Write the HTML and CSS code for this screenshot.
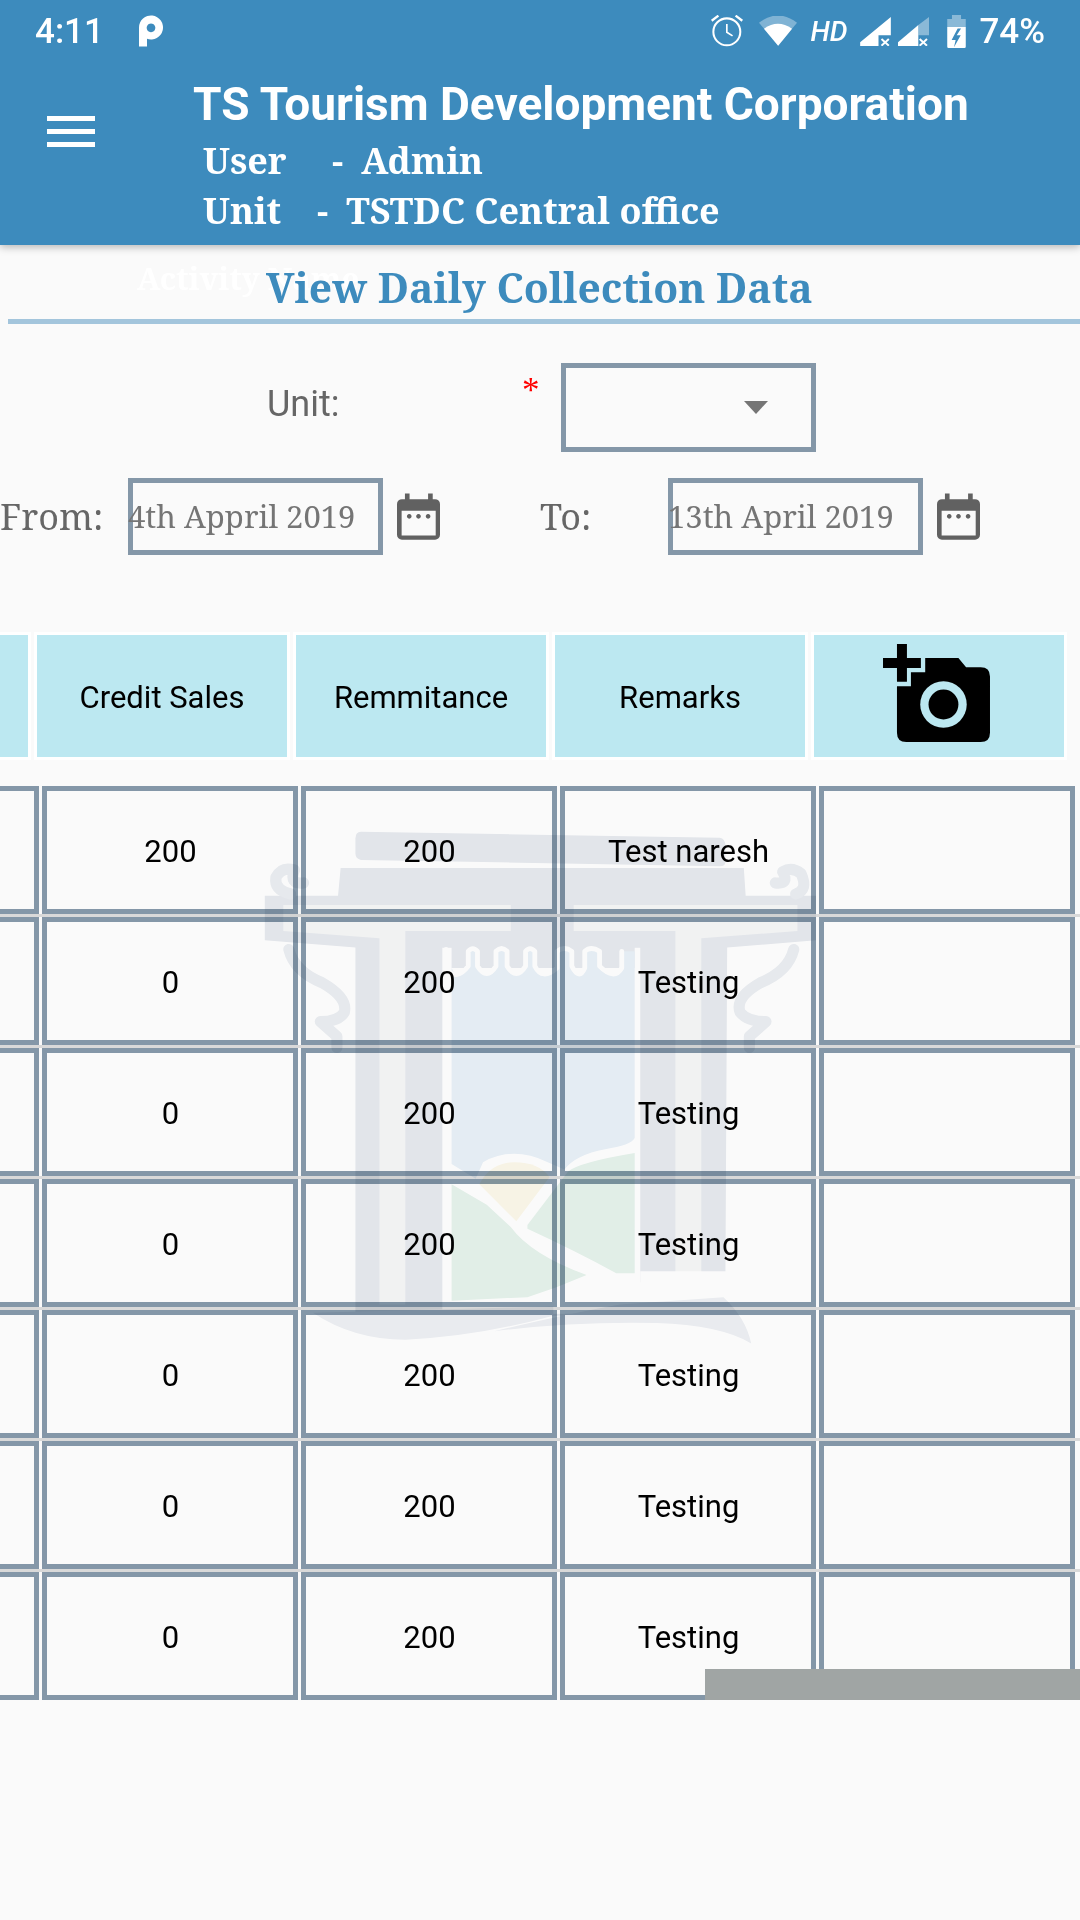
FILE: index.html
```html
<!DOCTYPE html>
<html lang="en">
<head>
<meta charset="utf-8">
<title>View Daily Collection Data</title>
<link rel="stylesheet" href="styles.css">
</head>
<body>
<div class="page">
  <header class="header">
    <div class="status">
      <span class="time">4:11</span>
      <svg class="ic-p" viewBox="417 47 72 93"><path fill-rule="evenodd" d="M417 83a36 36 0 1 1 24 34v23h-24zM453 71a13 13 0 1 0 .01 0z"/></svg>
      <span class="status-fill"></span>
      <svg class="ic-alarm" viewBox="90 45 95 95"><g fill="none" stroke="#fff" stroke-width="6"><circle cx="137" cy="95" r="40"/><path d="M137 72v24l17 11" stroke-width="5"/><path d="M92 62l20-15M183 62l-20-15" stroke-width="7"/></g></svg>
      <svg class="ic-wifi" viewBox="240 42 115 90"><path d="M240 62Q297 18 355 62L298 132z" fill="#fff" fill-opacity=".35"/><path d="M255 80Q297 50 340 80L298 132z" fill="#fff"/></svg>
      <span class="hd">HD</span>
      <svg class="ic-sig" viewBox="543 48 92 87"><path d="M543 124L635 48V103H598V135H543z" fill="#fff"/><path d="M607 114l22 20M629 114l-22 20" stroke="#fff" stroke-width="6"/></svg>
      <svg class="ic-sig ic-sig2" viewBox="657 48 93 87"><path d="M657 124L718 72V135H657z" fill="#fff"/><path d="M718 72L750 48V103H718z" fill="#fff" fill-opacity=".4"/><path d="M722 114l22 20M744 114l-22 20" stroke="#fff" stroke-width="6"/></svg>
      <svg class="ic-bat" viewBox="805 42 55 98"><path d="M819 42h27v12h14v24H805V54h14z" fill="#fff" fill-opacity=".4"/><path fill-rule="evenodd" d="M805 78h55v58a4 4 0 0 1-4 4H809a4 4 0 0 1-4-4zM836 82l-18 34h12l-5 22 20-36H833l13-20z" fill="#fff"/></svg>
      <span class="battery">74%</span>
    </div>
    <div class="appbar">
      <div class="menu"><span></span><span></span><span></span></div>
      <div class="titles">
        <div class="brand">TS Tourism Development Corporation</div>
        <div class="meta"><span class="meta-k">User</span><span class="dash-user">-</span><span class="val-user">Admin</span></div>
        <div class="meta"><span class="meta-k">Unit</span><span class="dash-unit">-</span><span class="val-unit">TSTDC Central office</span></div>
      </div>
    </div>
  </header>

  <main class="main">
    <div class="page-title">
      <span class="ghost">Activity Name</span>
      <h1>View Daily Collection Data</h1>
    </div>

    <div class="row-unit">
      <label class="lbl-unit">Unit:</label>
      <span class="req">*</span>
      <div class="select"><svg class="caret" viewBox="0 0 24 13"><path d="M0 0h24L12 13z"/></svg></div>
    </div>

    <div class="row-date">
      <label class="lbl-date lbl-from">From:</label>
      <div class="date-input">4th Appril 2019</div>
      <svg class="cal" viewBox="48 38 130 142"><path fill-rule="evenodd" d="M72 38h14v17h56V38h14v17h7a15 15 0 0 1 15 15v93a15 15 0 0 1-15 15H63a15 15 0 0 1-15-15V70a15 15 0 0 1 15-15h9zM62 90v75h103V90zM85 100a7 7 0 1 0 .01 0zM113 100a7 7 0 1 0 .01 0zM142 100a7 7 0 1 0 .01 0z"/></svg>
      <label class="lbl-date lbl-to">To:</label>
      <div class="date-input">13th April 2019</div>
      <svg class="cal" viewBox="48 38 130 142"><path fill-rule="evenodd" d="M72 38h14v17h56V38h14v17h7a15 15 0 0 1 15 15v93a15 15 0 0 1-15 15H63a15 15 0 0 1-15-15V70a15 15 0 0 1 15-15h9zM62 90v75h103V90zM85 100a7 7 0 1 0 .01 0zM113 100a7 7 0 1 0 .01 0zM142 100a7 7 0 1 0 .01 0z"/></svg>
    </div>

    <div class="thead">
      <div class="th"></div>
      <div class="th">Credit Sales</div>
      <div class="th">Remmitance</div>
      <div class="th">Remarks</div>
      <div class="th">
        <svg class="ic-cam" viewBox="68 58 322 295"><path d="M195 100H295L318 128H362Q390 128 390 156V325Q390 353 362 353H138Q110 353 110 325V185H152V143H195Z"/><circle cx="250" cy="240" r="70" fill="#bce8f1"/><circle cx="250" cy="240" r="45"/><path d="M110 58h30v42h42v30h-42v42h-30v-42H68v-30h42z"/></svg>
      </div>
    </div>

    <div class="tbody">
      <div class="tr"><div class="td"></div><div class="td">200</div><div class="td">200</div><div class="td">Test naresh</div><div class="td"></div></div>
      <div class="tr"><div class="td"></div><div class="td">0</div><div class="td">200</div><div class="td">Testing</div><div class="td"></div></div>
      <div class="tr"><div class="td"></div><div class="td">0</div><div class="td">200</div><div class="td">Testing</div><div class="td"></div></div>
      <div class="tr"><div class="td"></div><div class="td">0</div><div class="td">200</div><div class="td">Testing</div><div class="td"></div></div>
      <div class="tr"><div class="td"></div><div class="td">0</div><div class="td">200</div><div class="td">Testing</div><div class="td"></div></div>
      <div class="tr"><div class="td"></div><div class="td">0</div><div class="td">200</div><div class="td">Testing</div><div class="td"></div></div>
      <div class="tr"><div class="td"></div><div class="td">0</div><div class="td">200</div><div class="td">Testing</div><div class="td"></div></div>
      <div class="scrollbar"></div>
    </div>
  </main>

  <svg class="watermark" viewBox="0 0 1568 1568" aria-hidden="true">
    <!-- roof bars -->
    <path class="wm-gray" d="M300 32L1270 48Q1285 50 1285 70V115Q1285 125 1270 125L300 108Q285 105 285 90V50Q285 32 300 32Z"/>
    <path class="wm-gray" d="M245 130H1335L1340 205H1530V325L1290 345L1285 1285L1220 1250H1055L1040 1340H285V345L40 325V205H238Z"/>
    <!-- pale slots and the strips between the columns -->
    <path class="wm-pale" d="M90 230H705V300H420V1310H350V320L90 300Z"/>
    <path class="wm-pale" d="M875 230H1480V300L1220 320V1300H1150V300H875Z"/>
    <!-- panel -->
    <rect class="wm-white" x="520" y="345" width="535" height="990"/>
    <rect class="wm-white" x="1055" y="1220" width="240" height="125"/>
    <path class="wm-gray" d="M520 300H1055V345H1040L1040 400H545V345H520Z"/>
    <path class="wm-blue" d="M545 400Q560 435 590 395V355Q602 340 615 355V395Q640 435 665 395V355Q680 340 695 355V395Q720 435 745 395V355Q757 340 770 355V395Q790 435 830 400V355Q850 340 870 355V395Q890 435 905 400V355Q922 340 945 355V395Q985 435 1005 400V355H1040V860Q1030 880 960 890Q880 905 850 945L805 925Q710 880 630 925L610 970L545 930Z"/>
    <path class="wm-line" d="M530 350V405Q560 435 590 395V355Q602 340 615 355V395Q640 435 665 395V355Q680 340 695 355V395Q720 435 745 395V355Q757 340 770 355V395Q790 435 830 400V355Q850 340 870 355V395Q890 435 905 400V355Q922 340 945 355V395Q985 435 1005 400V355"/>
    <path class="wm-yellow" d="M620 985Q650 925 715 925Q780 925 810 965L720 1085Z"/>
    <path class="wm-green" d="M545 985L640 1040L705 1100Q760 1175 910 1230Q830 1265 750 1290L545 1300Z"/>
    <path class="wm-green" d="M750 1095L860 950Q890 925 1040 900V1225L990 1225Q880 1165 750 1105Z"/>
    <!-- scrolls -->
    <path class="wm-stroke" d="M105 350Q120 410 195 440Q265 480 255 520Q240 545 190 545L235 585V615"/>
    <path class="wm-stroke" d="M1470 350Q1455 410 1380 440Q1310 480 1325 520Q1345 545 1395 545L1350 585V615"/>
    <path class="wm-stroke" d="M110 200Q65 190 70 155Q85 125 120 135Q105 175 145 170"/>
    <path class="wm-stroke" d="M1475 200Q1510 190 1490 145Q1465 125 1440 140Q1460 175 1420 170"/>
    <!-- ribbons -->
    <path class="wm-ribbon" d="M170 1332L820 1315V1340Q620 1395 420 1405Q280 1405 170 1332Z"/>
    <path class="wm-ribbon" d="M660 1382Q860 1335 1000 1310L1280 1290Q1340 1345 1355 1415Q1270 1365 1100 1360Q880 1355 660 1382Z"/>
  </svg>
</div>
</body>
</html>
```

FILE: styles.css
```css
* { box-sizing: border-box; }
html, body { margin: 0; padding: 0; }
body { background: #fafafa; font-family: Roboto, sans-serif; }
.page { position: relative; width: 1080px; height: 1920px; overflow: hidden; background: #fafafa; }

.header { height: 245px; background: #3d8bbd; color: #fff; box-shadow: 0 2px 8px rgba(0,0,0,.28); position: relative; z-index: 2; }
.status { height: 62px; display: flex; align-items: center; padding: 0 36px 0 35px; }
.time { font-size: 35px; font-weight: 500; width: 104px; }
.ic-p { width: 24px; height: 32px; fill: #fff; }
.status-fill { flex: 1; }
.ic-alarm { width: 32px; height: 32px; margin-right: 16px; }
.ic-wifi { width: 38px; height: 30px; margin-right: 13px; }
.hd { font-size: 28px; font-weight: 500; font-style: italic; margin-right: 14px; width: 36px; }
.ic-sig { width: 31px; height: 29px; }
.ic-sig2 { margin-left: 7px; margin-right: 18px; }
.ic-bat { width: 19px; height: 33px; margin-right: 13px; }
.battery { font-size: 35px; font-weight: 500; margin-right: -1px; }

.appbar { display: flex; align-items: flex-start; padding-left: 47px; }
.menu { display: flex; flex-direction: column; gap: 8px; width: 48px; margin-top: 54px; }
.menu span { display: block; height: 5px; background: #fff; }
.titles { margin-left: 98px; padding-top: 17px; }
.brand { font-size: 46px; font-weight: 700; line-height: 50px; white-space: nowrap; }
.meta { font-family: "Noto Serif", "DejaVu Serif Condensed", "Liberation Serif", serif; font-weight: 700; font-size: 36px; line-height: 50px; margin-left: 10px; white-space: nowrap; display: flex; position: relative; top: 7px; }
.meta-k { width: 83px; }
.dash-user { margin-left: 46px; }
.val-user { margin-left: 18px; }
.dash-unit { margin-left: 31px; }
.val-unit { margin-left: 18px; }

.main { display: flex; flex-direction: column; }
.page-title { position: relative; margin-left: 8px; height: 79px; border-bottom: 5px solid #a3c5dc; }
.page-title h1 { margin: 0; padding: 17px 0 0 258px; font-family: "Noto Serif", "DejaVu Serif Condensed", "Liberation Serif", serif; font-weight: 700; font-size: 40.8px; line-height: 50px; color: #3d8bbd; position: relative; white-space: nowrap; }
.ghost { position: absolute; left: 129px; top: 8px; font-family: "Noto Serif", "DejaVu Serif Condensed", "Liberation Serif", serif; font-weight: 700; font-size: 31px; line-height: 50px; color: #fff; white-space: nowrap; }

.row-unit { display: flex; align-items: flex-start; margin-top: 39px; height: 89px; }
.lbl-unit { font-size: 36px; color: #666; margin-left: 267px; margin-top: 16px; width: 255px; line-height: 50px; }
.req { color: #f00; font-family: "Liberation Serif", serif; font-size: 35px; line-height: 38px; margin-top: 9px; width: 39px; }
.select { width: 255px; height: 89px; border: 5px solid #8497a8; display: flex; align-items: center; justify-content: flex-end; padding-right: 43px; }
.caret { width: 24px; height: 13px; fill: #757575; }

.row-date { display: flex; align-items: center; margin-top: 26px; height: 77px; }
.lbl-date { font-family: "Noto Serif", "DejaVu Serif Condensed", "Liberation Serif", serif; font-size: 36px; color: #666; }
.lbl-from { width: 128px; }
.lbl-to { margin-left: 100px; width: 128px; }
.date-input { width: 255px; height: 77px; border: 5px solid #8497a8; display: flex; align-items: center; font-family: "Noto Serif", "DejaVu Serif Condensed", "Liberation Serif", serif; font-size: 31px; color: #757575; white-space: nowrap; line-height: 1; text-indent: -5px; }
.cal { width: 43px; height: 48px; margin-left: 14px; fill: #616161; }

.thead { display: flex; gap: 3px; margin-top: 77px; margin-left: -225px; }
.th { flex: 0 0 256px; height: 128px; border: 3px solid #fff; background: #bce8f1; display: flex; align-items: center; justify-content: center; font-size: 31px; padding-top: 2px; color: #000; }
.ic-cam { width: 107px; height: 98px; margin-right: 5px; margin-bottom: 8px; fill: #000; }

.tbody { position: relative; margin-top: 26px; }
.tr { display: flex; gap: 3px; margin-left: -217px; height: 131px; position: relative; }
.tr::after { content: ""; position: absolute; left: 0; right: -400px; top: 128px; height: 3px; background: #d9d9d9; }
.tr:nth-last-child(2)::after { display: none; }
.td { flex: 0 0 256px; height: 128px; border: 5px solid #8497a8; display: flex; align-items: center; justify-content: center; font-size: 31px; padding: 2px 0 0 1px; color: #000; }
.scrollbar { position: absolute; right: 0; width: 375px; top: 883px; height: 31px; background: #a0a5a4; z-index: 3; }

.watermark { position: absolute; left: 250px; top: 820px; width: 580px; height: 580px; mix-blend-mode: multiply; pointer-events: none; filter: blur(.7px); }
.wm-gray { fill: #e7eaef; }
.wm-pale { fill: #f6f7f7; }
.wm-white { fill: #fff; }
.wm-blue { fill: #e9f1f8; }
.wm-yellow { fill: #fcf8ea; }
.wm-green { fill: #e6f3ec; }
.wm-line { fill: none; stroke: #fff; stroke-width: 13; stroke-linecap: round; stroke-linejoin: round; }
.wm-stroke { fill: none; stroke: #ebeef2; stroke-width: 30; stroke-linecap: round; stroke-linejoin: round; }
.wm-ribbon { fill: #eef0f4; }
```
